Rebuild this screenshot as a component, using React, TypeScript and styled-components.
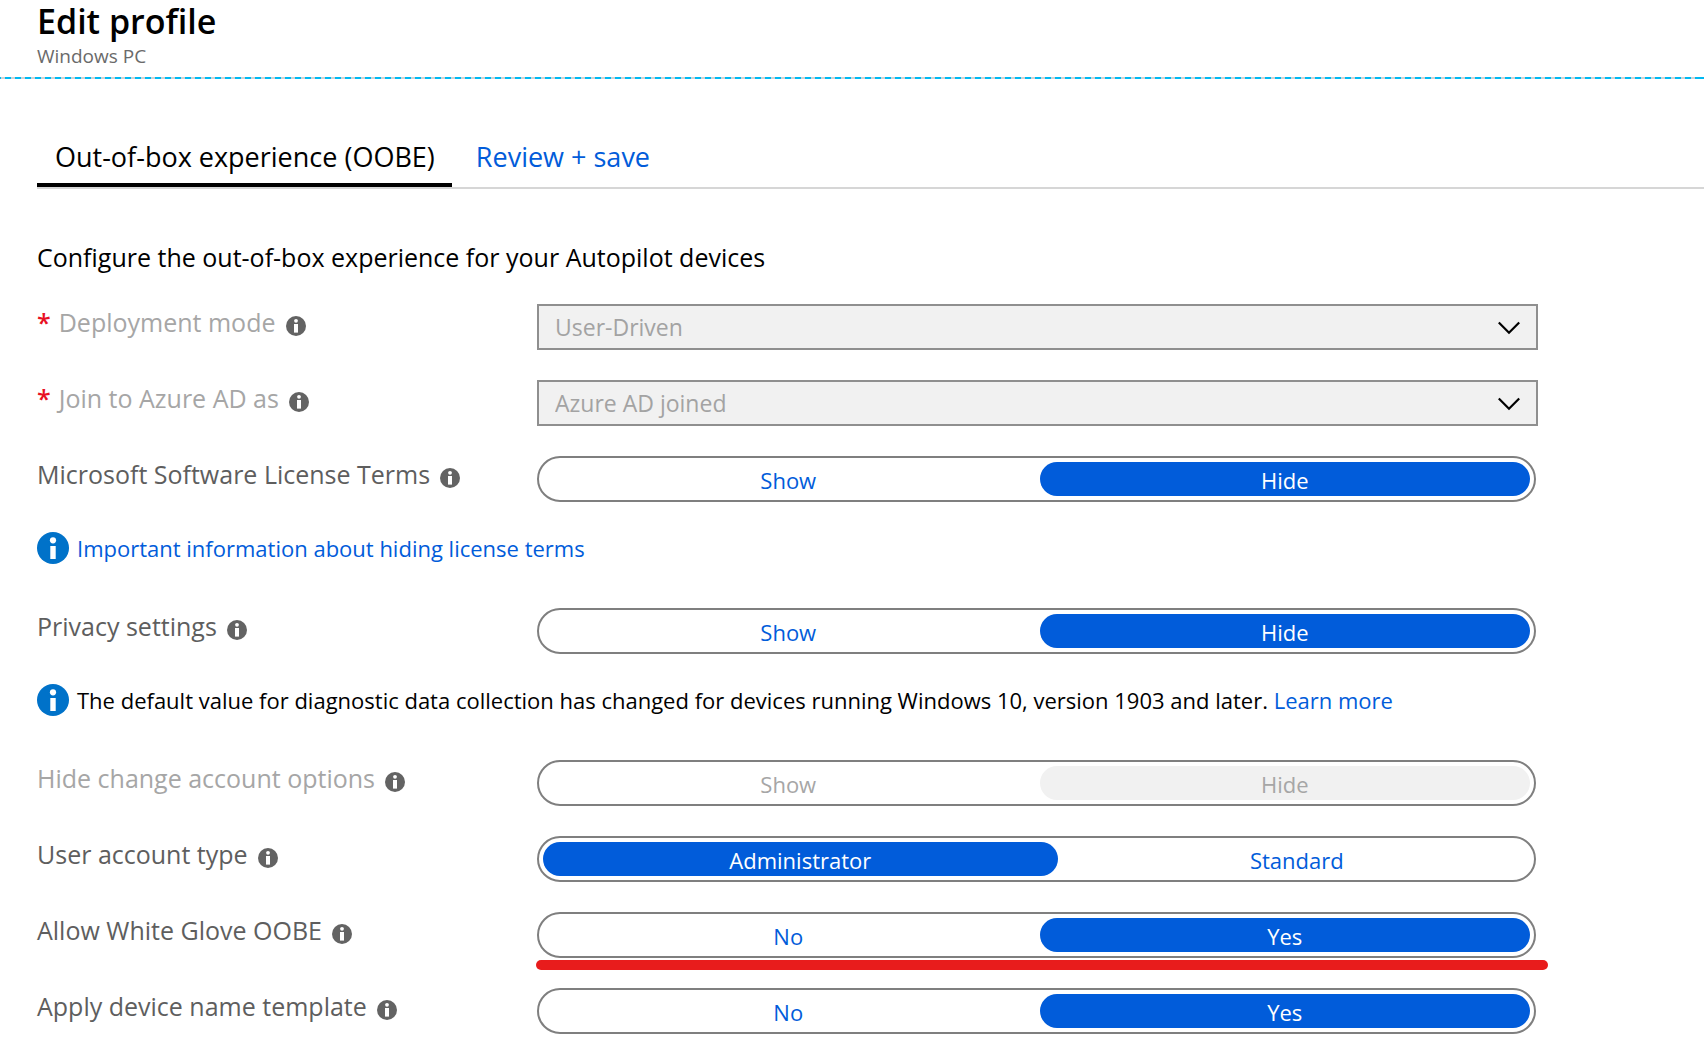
import React, { useState } from "react";
import styled, { createGlobalStyle } from "styled-components";

const BLUE = "#015cda";

const GlobalStyle = createGlobalStyle`
  *, *::before, *::after { box-sizing: border-box; }
  body {
    margin: 0;
    background: #fff;
    color: #000;
    font-family: "Open Sans", "Noto Sans", sans-serif;
  }
  button, select { font-family: inherit; }
`;

const Header = styled.header`
  padding: 0 37px 7px;
`;

const Title = styled.h1`
  margin: 0;
  font-size: 34px;
  line-height: 42px;
  font-weight: 600;
`;

const Subtitle = styled.p`
  margin: 0;
  font-size: 19px;
  line-height: 28px;
  color: #6a6a6a;
`;

const DashedRule = styled.div`
  height: 2px;
  background: repeating-linear-gradient(90deg, #00b9f2 0 6px, #d2d2d2 6px 10px);
  background-position-x: -5px;
`;

const Main = styled.main`
  padding-left: 37px;
`;

const TabList = styled.div`
  display: flex;
  gap: 6px;
  margin-top: 60px;
  border-bottom: 2px solid #d6d6d6;
`;

const Tab = styled.button<{ $active: boolean }>`
  padding: 0 17px 8px 18px;
  border: 0;
  border-bottom: 4px solid ${(p) => (p.$active ? "#000" : "transparent")};
  background: none;
  color: ${(p) => (p.$active ? "#000" : BLUE)};
  font-size: 27px;
  line-height: 36px;
  cursor: pointer;
`;

const Intro = styled.p`
  margin: 51px 0 30px;
  font-size: 25px;
  line-height: 34px;
`;

const Rows = styled.div`
  display: flex;
  flex-direction: column;
  gap: 30px;
  padding-right: 37px;
`;

const Row = styled.div`
  display: grid;
  grid-template-columns: 500px minmax(0, 1001px);
  min-height: 46px;
`;

const LabelCell = styled.div`
  display: flex;
  align-items: center;
  align-self: start;
  gap: 10px;
  line-height: 36px;
`;

const LabelText = styled.label<{ $disabled?: boolean }>`
  display: flex;
  gap: 8px;
  font-size: 25px;
  color: ${(p) => (p.$disabled ? "#a6a6a6" : "#5e5e5e")};
`;

const Required = styled.span`
  color: #e81123;
  font-weight: 600;
`;

const HelpButton = styled.button`
  display: flex;
  margin-top: 8px;
  padding: 0;
  border: 0;
  background: none;
  cursor: pointer;
`;

const SelectBox = styled.div`
  position: relative;
  height: 46px;
`;

const Select = styled.select`
  appearance: none;
  width: 100%;
  height: 100%;
  padding: 0 60px 0 16px;
  border: 2px solid #8f8f8f;
  border-radius: 0;
  background: #f1f1f1;
  color: #a3a3a3;
  font-size: 23px;
  opacity: 1;
`;

const Chevron = styled.svg`
  position: absolute;
  top: 16px;
  right: 17px;
  pointer-events: none;
`;

const ToggleGroup = styled.div`
  position: relative;
  display: flex;
  gap: 6px;
  height: 46px;
  margin-right: 2px;
  padding: 4px;
  border: 2px solid #7f7f7f;
  border-radius: 23px;
`;

const ToggleButton = styled.button<{ $selected: boolean }>`
  flex: 1 1 auto;
  padding: 2px 0 0;
  border: 0;
  border-radius: 17px;
  background: ${(p) => (p.$selected ? BLUE : "transparent")};
  color: ${(p) => (p.$selected ? "#fff" : BLUE)};
  font-size: 22px;
  line-height: 32px;
  cursor: pointer;

  &:disabled {
    background: ${(p) => (p.$selected ? "#f1f1f1" : "transparent")};
    color: #a6a6a6;
    cursor: default;
  }
`;

const ToggleText = styled.span`
  display: inline-block;
  min-width: 80px;
`;

const Highlight = styled.span`
  position: absolute;
  left: -3px;
  right: -14px;
  top: 46px;
  height: 10px;
  border-radius: 5px;
  background: #e81c1c;
`;

const Notice = styled.div`
  display: flex;
  align-items: flex-start;
  gap: 8px;
  min-height: 46px;
  font-size: 22px;
  line-height: 32px;
`;

const NoticeText = styled.p`
  margin: 0;
`;

const Link = styled.a`
  color: ${BLUE};
  text-decoration: none;
`;

const NoticeIcon = styled.svg`
  flex: none;
`;

function Help({ topic }: { topic: string }) {
  return (
    <HelpButton type="button" aria-label={`About ${topic}`}>
      <svg width="20" height="20" viewBox="0 0 20 20" aria-hidden="true">
        <circle cx="10" cy="10" r="10" fill="#636363" />
        <circle cx="10" cy="4.8" r="1.9" fill="#fff" />
        <rect x="8" y="8" width="4" height="8.6" fill="#fff" />
      </svg>
    </HelpButton>
  );
}

function InfoIcon() {
  return (
    <NoticeIcon width="32" height="32" viewBox="0 0 32 32" aria-hidden="true">
      <circle cx="16" cy="16" r="16" fill="#0072c9" />
      <circle cx="16" cy="8.3" r="3.1" fill="#fff" />
      <rect x="13.3" y="14" width="5.4" height="13" fill="#fff" />
    </NoticeIcon>
  );
}

function SelectRow({ id, label, value }: { id: string; label: string; value: string }) {
  return (
    <Row>
      <LabelCell>
        <LabelText htmlFor={id} $disabled>
          <Required>*</Required>
          {label}
        </LabelText>
        <Help topic={label} />
      </LabelCell>
      <SelectBox>
        <Select id={id} disabled defaultValue={value}>
          <option>{value}</option>
        </Select>
        <Chevron width="24" height="16" viewBox="0 0 24 16" aria-hidden="true">
          <path d="M1.8 2.5 L12 12.7 L22.2 2.5" fill="none" stroke="#000" strokeWidth="2.2" />
        </Chevron>
      </SelectBox>
    </Row>
  );
}

type ToggleRowProps = {
  id: string;
  label: string;
  options: [string, string];
  initial: number;
  disabled?: boolean;
  highlighted?: boolean;
};

function ToggleRow({ id, label, options, initial, disabled, highlighted }: ToggleRowProps) {
  const [selected, setSelected] = useState(initial);
  return (
    <Row>
      <LabelCell>
        <LabelText as="span" id={id} $disabled={disabled}>
          {label}
        </LabelText>
        <Help topic={label} />
      </LabelCell>
      <ToggleGroup role="group" aria-labelledby={id}>
        {options.map((option, i) => (
          <ToggleButton
            key={option}
            type="button"
            $selected={i === selected}
            aria-pressed={i === selected}
            disabled={disabled}
            onClick={() => setSelected(i)}
          >
            <ToggleText>{option}</ToggleText>
          </ToggleButton>
        ))}
        {highlighted && <Highlight />}
      </ToggleGroup>
    </Row>
  );
}

export default function App() {
  const [tab, setTab] = useState(0);
  return (
    <>
      <GlobalStyle />
      <Header>
        <Title>Edit profile</Title>
        <Subtitle>Windows PC</Subtitle>
      </Header>
      <DashedRule />
      <Main>
        <TabList role="tablist">
          {["Out-of-box experience (OOBE)", "Review + save"].map((name, i) => (
            <Tab
              key={name}
              type="button"
              role="tab"
              aria-selected={i === tab}
              $active={i === tab}
              onClick={() => setTab(i)}
            >
              {name}
            </Tab>
          ))}
        </TabList>
        <Intro>Configure the out-of-box experience for your Autopilot devices</Intro>
        <Rows>
          <SelectRow id="deployment" label="Deployment mode" value="User-Driven" />
          <SelectRow id="join" label="Join to Azure AD as" value="Azure AD joined" />
          <ToggleRow id="license" label="Microsoft Software License Terms" options={["Show", "Hide"]} initial={1} />
          <Notice>
            <InfoIcon />
            <Link href="#license-terms">Important information about hiding license terms</Link>
          </Notice>
          <ToggleRow id="privacy" label="Privacy settings" options={["Show", "Hide"]} initial={1} />
          <Notice>
            <InfoIcon />
            <NoticeText>
              The default value for diagnostic data collection has changed for devices running Windows 10, version
              1903 and later. <Link href="#diagnostic-data">Learn more</Link>
            </NoticeText>
          </Notice>
          <ToggleRow id="account" label="Hide change account options" options={["Show", "Hide"]} initial={1} disabled />
          <ToggleRow id="type" label="User account type" options={["Administrator", "Standard"]} initial={0} />
          <ToggleRow id="glove" label="Allow White Glove OOBE" options={["No", "Yes"]} initial={1} highlighted />
          <ToggleRow id="template" label="Apply device name template" options={["No", "Yes"]} initial={1} />
        </Rows>
      </Main>
    </>
  );
}
